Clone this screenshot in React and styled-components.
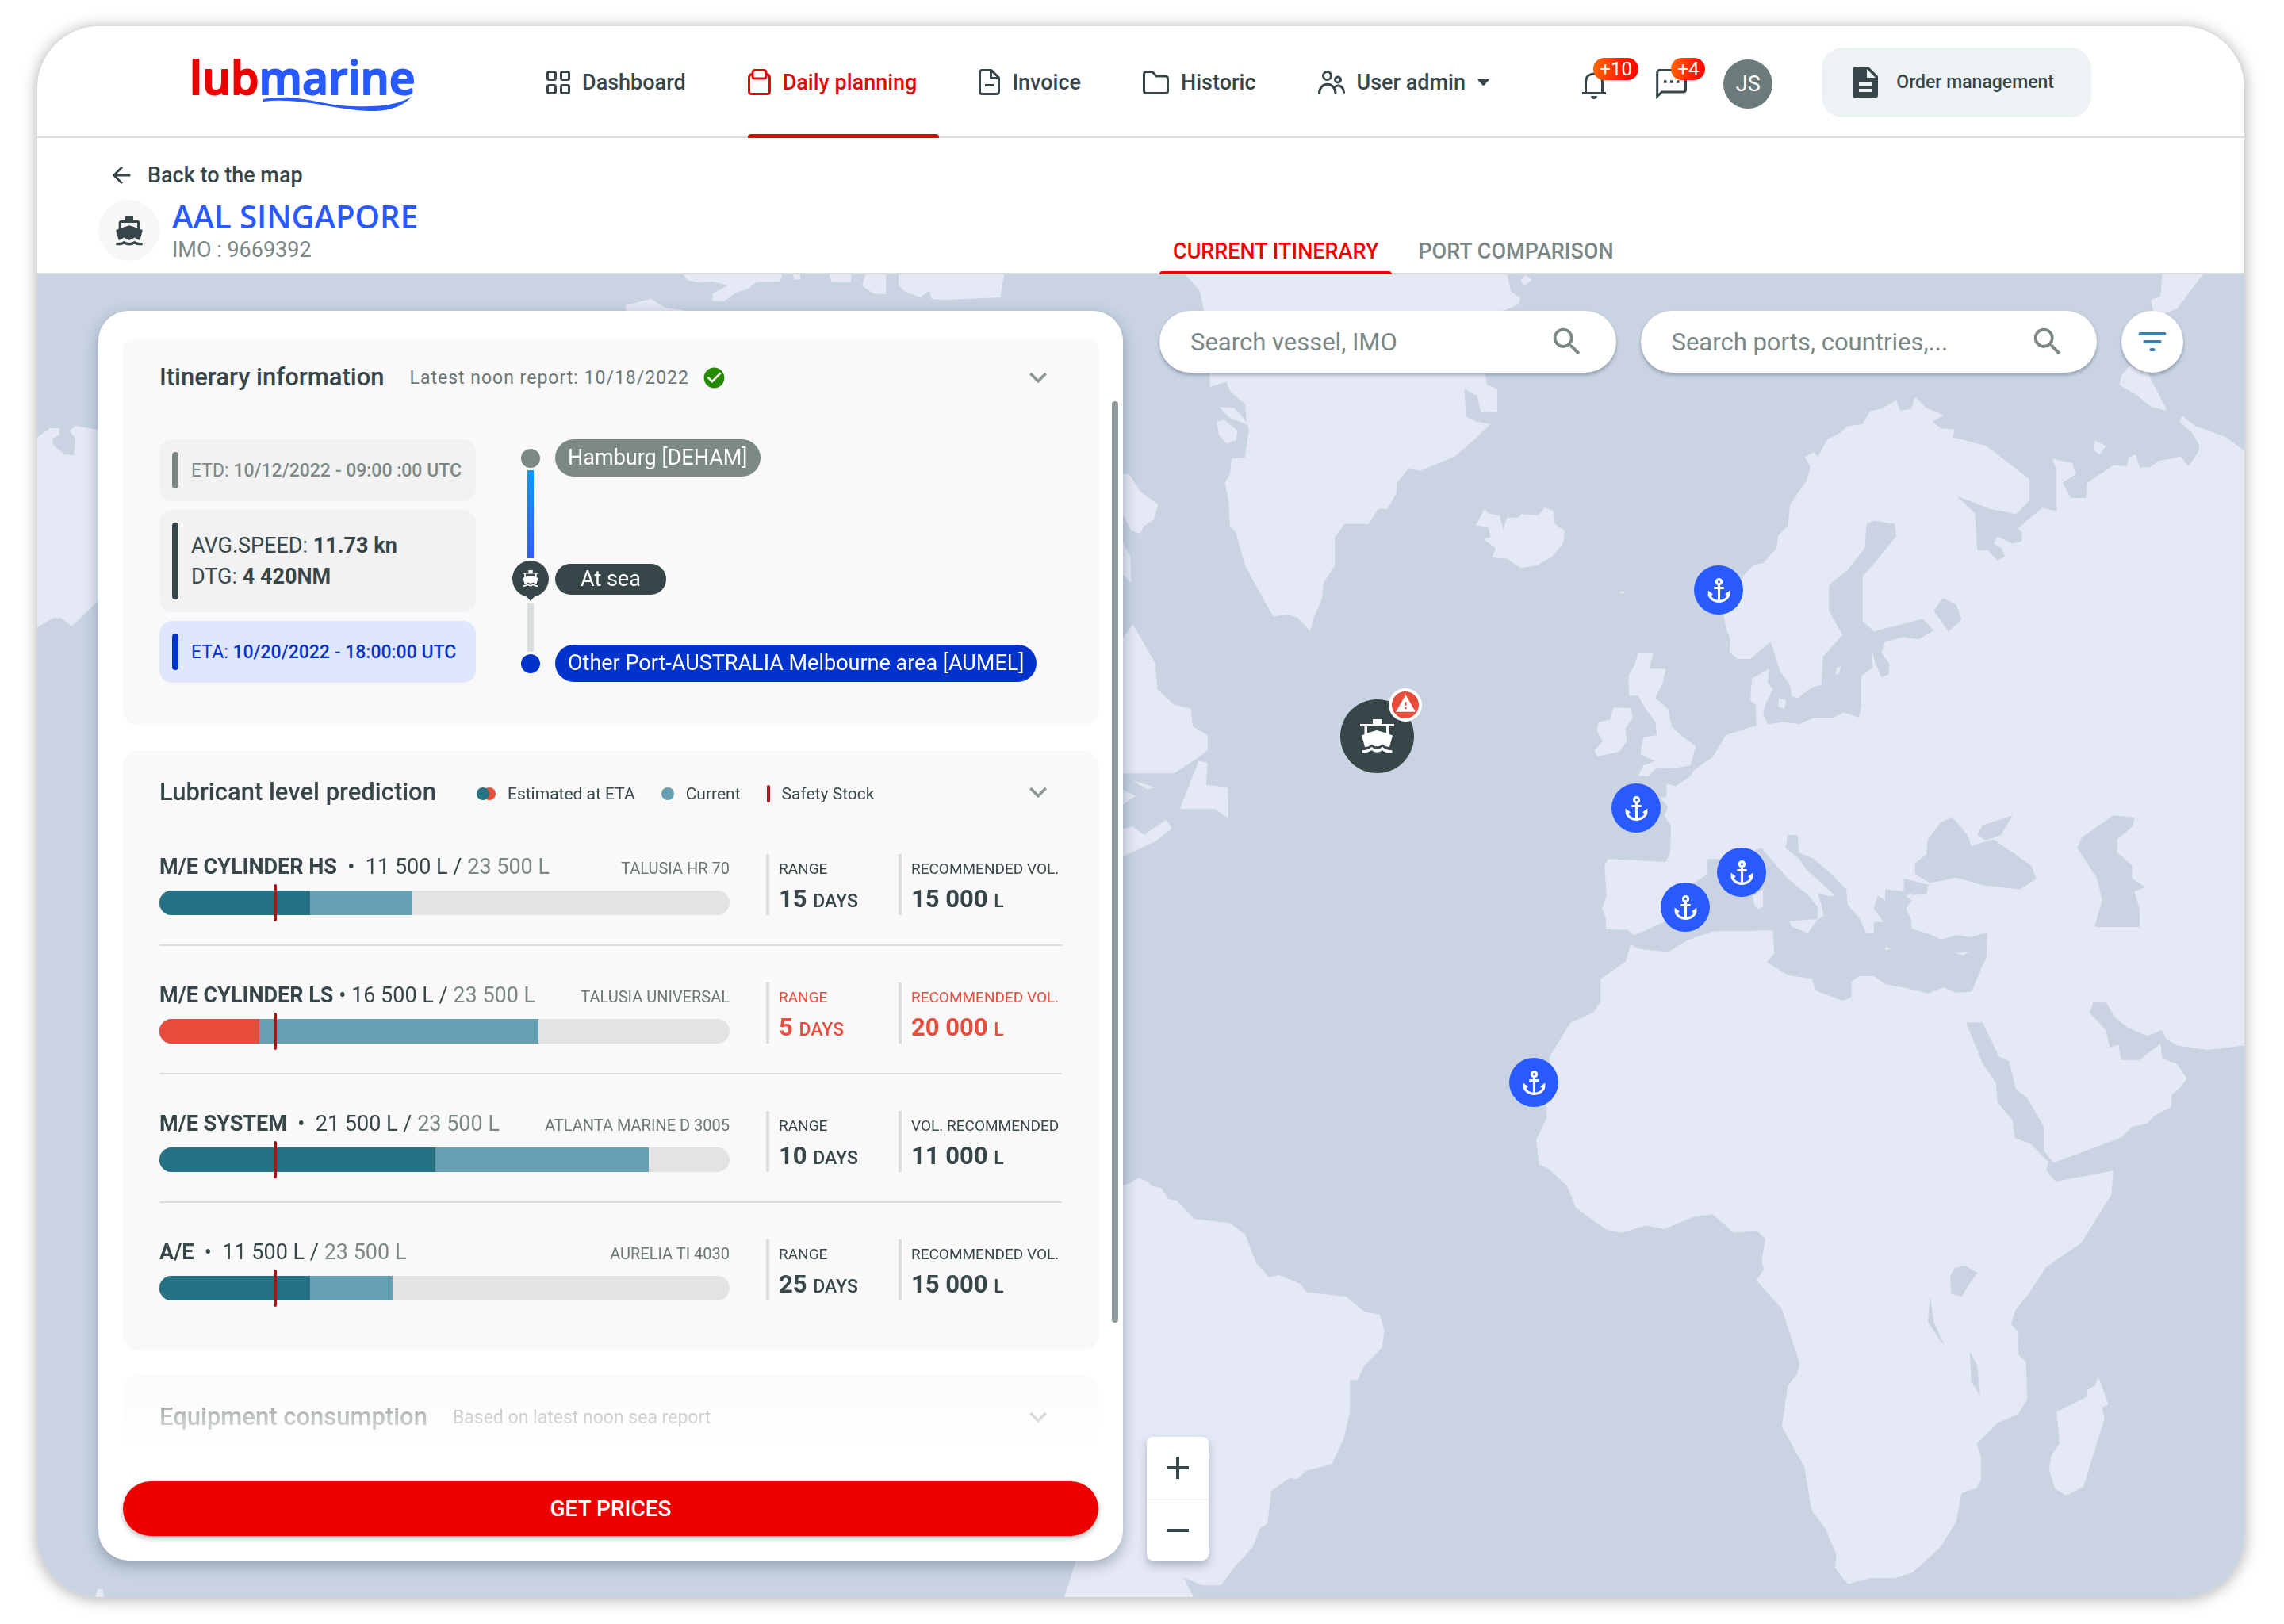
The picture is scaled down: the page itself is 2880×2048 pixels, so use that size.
import React from 'react'
import styled, { createGlobalStyle, css } from 'styled-components';
import {
  MdAnchor,
  MdArrowBack,
  MdCheckCircle,
  MdDescription,
  MdDirectionsBoat,
  MdKeyboardArrowDown,
  MdSearch,
  MdWarning,
} from 'react-icons/md';

const colors = {
  ink: '#374649',
  grey: '#7b8886',
  soft: '#6b7877',
  line: '#dadddd',
  red: '#ed0000',
  alert: '#e84c3d',
  blue: '#285aff',
  navy: '#0032cc',
  teal: '#267284',
  sky: '#67a0b3',
  sea: '#c9d3e2',
  land: '#e5e8f5',
};

const GlobalStyle = createGlobalStyle`
  * {
    box-sizing: border-box;
  }
  body {
    margin: 0;
    background-color: white;
    color: ${colors.ink};
    font-family: Roboto, "Liberation Sans", sans-serif;
  }
  button, input {
    font-family: inherit;
    color: inherit;
  }
  h1, h2, h3, p, dl, dd, ul {
    margin: 0;
    padding: 0;
  }
  a {
    color: inherit;
    text-decoration: none;
  }
  button {
    border: none;
    padding: 0;
    background: none;
    cursor: pointer;
  }
  svg {
    display: block;
    flex: none;
  }
`;

/* ---------- frame ---------- */

const Page = styled.div`
  min-height: 100vh;
  display: flex;
  padding: 33px 50px 34px 47px;
`;
const Frame = styled.div`
  flex: 1;
  min-width: 0;
  display: flex;
  flex-direction: column;
  border-radius: 78px;
  overflow: hidden;
  background-color: white;
  box-shadow: 0 2px 20px rgba(0, 0, 0, 0.34);
`;

/* ---------- header ---------- */

const Header = styled.header`
  height: 141px;
  display: flex;
  align-items: center;
  padding: 2px 193px 0 190px;
  border-bottom: 2px solid ${colors.line};
`;
const Nav = styled.nav`
  align-self: stretch;
  display: flex;
  gap: 78px;
  margin-left: 156px;
`;
const NavItem = styled.a`
  position: relative;
  display: flex;
  align-items: center;
  gap: 15px;
  font-size: 27px;
  font-weight: 500;
  color: ${(props) => (props.$active ? '#dc0a0a' : colors.ink)};
  ${(props) =>
    props.$active &&
    css`
      &::after {
        content: '';
        position: absolute;
        left: 0;
        right: -28px;
        bottom: -2px;
        height: 5px;
        border-radius: 4px 4px 0 0;
        background-color: #dc0a0a;
      }
    `}
`;
const Actions = styled.div`
  display: flex;
  align-items: center;
  gap: 62px;
  margin-left: auto;
`;
const Tools = styled.div`
  display: flex;
  align-items: center;
  padding-top: 4px;
`;
const IconButton = styled.button`
  position: relative;
  margin-right: ${(props) => props.$space}px;
`;
const Badge = styled.span`
  position: absolute;
  top: -14px;
  left: ${(props) => props.$left}px;
  height: 28px;
  padding: 0 8px;
  border-radius: 14px;
  font-size: 24px;
  line-height: 28px;
  color: white;
  background: linear-gradient(100deg, #ff6a00, #ff0a00 80%);
`;
const Avatar = styled.button`
  width: 62px;
  height: 62px;
  border-radius: 50%;
  font-size: 27px;
  color: white;
  background-color: #6b7a7b;
`;
const OrderButton = styled.button`
  display: flex;
  align-items: center;
  gap: 15px;
  height: 88px;
  padding: 0 47px 0 31px;
  border-radius: 26px;
  font-size: 23px;
  font-weight: 500;
  background-color: #edf2f5;
`;

/* ---------- vessel bar ---------- */

const columns = css`
  display: grid;
  grid-template-columns: 1292fr 1307fr;
  column-gap: 30px;
  padding: 0 77px;
`;
const VesselBar = styled.section`
  ${columns}
  border-bottom: 2px solid ${colors.line};
`;
const Vessel = styled.div`
  padding: 30px 0 8px;
`;
const BackLink = styled.a`
  display: inline-flex;
  align-items: center;
  gap: 16px;
  height: 34px;
  margin: 0 0 14px 12px;
  font-size: 27px;
  font-weight: 500;
`;
const VesselId = styled.div`
  display: flex;
  gap: 16px;
`;
const VesselIcon = styled.span`
  width: 77px;
  height: 77px;
  border-radius: 50%;
  display: flex;
  align-items: center;
  justify-content: center;
  background-color: #f7f7f7;
`;
const VesselName = styled.h1`
  font-family: "Open Sans", "Noto Sans", sans-serif;
  font-size: 40px;
  font-weight: 600;
  line-height: 42px;
  color: ${colors.blue};
`;
const VesselImo = styled.p`
  font-size: 27px;
  line-height: 42px;
  color: ${colors.grey};
`;
const Tabs = styled.div`
  display: flex;
  align-items: flex-end;
  gap: 16px;
  padding-left: 16px;
`;
const Tab = styled.button`
  position: relative;
  height: 58px;
  margin-bottom: -2px;
  padding: 0 17px;
  font-size: 27px;
  font-weight: 500;
  color: ${(props) => (props.$active ? colors.red : colors.grey)};
  ${(props) =>
    props.$active &&
    css`
      &::after {
        content: '';
        position: absolute;
        left: 0;
        right: 0;
        bottom: 0;
        height: 4px;
        border-radius: 4px 4px 0 0;
        background-color: ${colors.red};
      }
    `}
`;

/* ---------- map ---------- */

const MapArea = styled.main`
  ${columns}
  position: relative;
  flex: 1;
  padding-top: 46px;
  padding-bottom: 46px;
  background-color: ${colors.sea};
`;
const MapDrawing = styled.svg`
  position: absolute;
  inset: 0;
  width: 100%;
  height: 100%;
`;
const Pin = styled.button`
  position: absolute;
  left: ${(props) => props.$x}px;
  top: ${(props) => props.$y}px;
  width: ${(props) => props.$size}px;
  height: ${(props) => props.$size}px;
  border-radius: 50%;
  display: flex;
  align-items: center;
  justify-content: center;
  color: white;
  background-color: ${(props) => props.$color};
`;
const PinAlert = styled.span`
  position: absolute;
  top: -14px;
  right: -10px;
  width: 42px;
  height: 42px;
  border: 4px solid white;
  border-radius: 50%;
  display: flex;
  align-items: center;
  justify-content: center;
  padding-bottom: 3px;
  background-color: ${colors.alert};
`;
const MapSide = styled.div`
  position: relative;
  display: flex;
  flex-direction: column;
  justify-content: space-between;
`;
const MapToolbar = styled.div`
  display: flex;
  gap: 31px;
  padding-left: 16px;
`;
const SearchBox = styled.label`
  flex: 1;
  min-width: 0;
  height: 78px;
  display: flex;
  align-items: center;
  padding: 0 39px;
  border-radius: 39px;
  background-color: white;
  color: ${colors.grey};
  box-shadow: 0 3px 4px rgba(60, 80, 95, 0.4);
`;
const SearchInput = styled.input`
  flex: 1;
  min-width: 0;
  border: none;
  padding: 0;
  outline: none;
  font-size: 31px;
  background: none;
  text-overflow: ellipsis;
  &::placeholder {
    color: ${colors.grey};
    opacity: 1;
  }
`;
const FilterButton = styled.button`
  width: 78px;
  height: 78px;
  border-radius: 50%;
  display: flex;
  align-items: center;
  justify-content: center;
  background-color: white;
  box-shadow: 0 3px 4px rgba(60, 80, 95, 0.4);
`;
const ZoomControl = styled.div`
  width: 78px;
  border-radius: 8px;
  background-color: white;
  box-shadow: 0 6px 12px rgba(60, 80, 95, 0.35);
`;
const ZoomButton = styled.button`
  width: 100%;
  height: 78px;
  display: flex;
  align-items: center;
  justify-content: center;
  & + & {
    border-top: 2px solid #f3f4f5;
  }
`;

/* ---------- panel ---------- */

const Panel = styled.section`
  position: relative;
  display: flex;
  flex-direction: column;
  padding: 31px;
  border-radius: 38px;
  background-color: white;
  box-shadow: 0 6px 18px rgba(60, 80, 100, 0.42);
`;
const PanelScroll = styled.div`
  flex: 1 1 0;
  min-height: 1440px;
  overflow: hidden;
  display: flex;
  flex-direction: column;
  gap: 31px;
  mask-image: linear-gradient(
    transparent,
    black 10px,
    black calc(100% - 160px),
    rgba(0, 0, 0, 0.32) calc(100% - 80px),
    transparent calc(100% - 30px)
  );
`;
const ScrollThumb = styled.span`
  position: absolute;
  top: 114px;
  bottom: 300px;
  right: 6px;
  width: 8px;
  border-radius: 4px;
  background-color: #919b9c;
`;
const Card = styled.section`
  flex: none;
  padding: 33px 46px ${(props) => props.$bottom}px;
  border-radius: 20px;
  background-color: #f9f9f9;
`;
const CardHeader = styled.div`
  display: flex;
  align-items: center;
  height: 40px;
  margin-bottom: 58px;
`;
const CardTitle = styled.h2`
  font-size: 31px;
  font-weight: 500;
  line-height: 40px;
`;
const CardNote = styled.p`
  display: flex;
  align-items: center;
  gap: 16px;
  margin-left: 32px;
  font-size: 23px;
  letter-spacing: ${(props) => (props.$wide ? 1 : 0)}px;
  color: ${colors.soft};
`;
const Toggle = styled.button`
  width: 44px;
  height: 44px;
  margin: 0 8px 0 auto;
  color: #8b9696;
`;
const Legend = styled.ul`
  display: flex;
  align-items: center;
  gap: 33px;
  margin-left: 51px;
  padding-top: 4px;
  list-style: none;
`;
const LegendItem = styled.li`
  display: flex;
  align-items: center;
  gap: 15px;
  font-size: 21px;
`;

const Itinerary = styled.div`
  display: flex;
  gap: 46px;
`;
const InfoList = styled.div`
  width: 399px;
  display: flex;
  flex-direction: column;
  gap: 11px;
`;
const InfoBox = styled.div`
  display: flex;
  align-items: center;
  gap: 16px;
  height: ${(props) => (props.$tall ? 129 : 78)}px;
  padding: 16px;
  border-radius: 16px;
  font-size: ${(props) => (props.$tall ? 27 : 23)}px;
  line-height: 39px;
  white-space: nowrap;
  color: ${(props) => props.$color};
  background-color: ${(props) => props.$bg};
  &::before {
    content: '';
    width: 8px;
    height: 100%;
    flex: none;
    border-radius: 4px;
    background-color: currentColor;
  }
  strong {
    font-weight: ${(props) => (props.$tall ? 700 : 500)};
  }
`;
const Track = styled.div`
  width: 46px;
  display: flex;
  flex-direction: column;
  align-items: center;
  padding-top: 12px;
`;
const TrackDot = styled.span`
  width: 24px;
  height: 24px;
  border-radius: 50%;
  background-color: ${(props) => props.$color};
`;
const TrackLine = styled.span`
  width: 8px;
  height: ${(props) => props.$length}px;
  margin: 3px 0;
  background: ${(props) => props.$fill};
`;
const Stops = styled.div`
  display: flex;
  flex-direction: column;
  align-items: flex-start;
  margin-left: -38px;
`;
const Stop = styled.span`
  height: ${(props) => props.$height}px;
  padding: 0 ${(props) => props.$pad}px;
  border-radius: 24px;
  margin-bottom: ${(props) => props.$space}px;
  font-size: 27px;
  line-height: ${(props) => props.$height}px;
  white-space: nowrap;
  color: white;
  background-color: ${(props) => props.$color};
`;

const TankRow = styled.article`
  display: flex;
  padding-bottom: 37px;
  & + & {
    padding-top: 46px;
    border-top: 2px solid ${colors.line};
  }
  &:last-child {
    padding-bottom: 0;
  }
`;
const Tank = styled.div`
  flex: 1;
  display: flex;
  flex-direction: column;
  justify-content: space-between;
  height: 77px;
`;
const TankTitle = styled.div`
  display: flex;
  align-items: baseline;
  justify-content: space-between;
`;
const TankName = styled.h3`
  font-size: 27px;
  font-weight: 400;
  line-height: 32px;
  white-space: pre;
  strong {
    font-weight: 700;
  }
  span {
    color: ${colors.grey};
  }
`;
const Brand = styled.span`
  font-size: 20px;
  color: ${colors.soft};
`;
const Gauge = styled.div`
  position: relative;
  height: 31px;
  border-radius: 16px;
  background-color: #e1e4e3;
`;
const GaugeFill = styled.div`
  position: absolute;
  inset: 0 auto 0 0;
  border-radius: 16px 0 0 16px;
  background-color: ${(props) => props.$color};
`;
const SafetyMark = styled.span`
  position: absolute;
  top: -8px;
  bottom: -8px;
  left: 20%;
  width: 4px;
  border-radius: 2px;
  background-color: #a5161c;
`;
const Stat = styled.dl`
  display: flex;
  flex-direction: column;
  justify-content: space-between;
  width: ${(props) => props.$width}px;
  height: 77px;
  margin-left: ${(props) => props.$left}px;
  padding: 7px 0 0 12px;
  border-left: 4px solid ${colors.line};
  color: ${(props) => (props.$alert ? colors.alert : colors.ink)};
  dt {
    font-size: 19px;
    line-height: 24px;
    white-space: nowrap;
  }
  dd {
    font-size: 31px;
    font-weight: 700;
    line-height: 34px;
    white-space: nowrap;
  }
  small {
    font-size: 23px;
    font-weight: 500;
  }
`;
const PricesButton = styled.button`
  height: 69px;
  border-radius: 35px;
  font-size: 28px;
  font-weight: 500;
  color: white;
  background-color: ${colors.red};
  box-shadow: 0 3px 6px rgba(60, 60, 60, 0.35);
`;

/* ---------- drawings ---------- */

function Logo() {
  return (
    <svg width="296" height="100" viewBox="0 0 296 100" role="img" aria-label="Lubmarine">
      <g fontFamily="'Open Sans', sans-serif" fontSize="57" fontWeight="600" strokeWidth="2" strokeLinejoin="round">
        <text x="2" y="65">
          <tspan fill={colors.red} stroke={colors.red}>lub</tspan>
          <tspan fill={colors.blue} stroke={colors.blue}>marine</tspan>
        </text>
      </g>
      <path
        d="M95 71C140 63 165 79 208 80C243 81 262 79 282 68C266 85 243 88 213 85C173 81 140 69 95 74Z"
        fill={colors.blue}
      />
    </svg>
  );
}

function DashboardIcon() {
  return (
    <svg width="30" height="30" viewBox="0 0 30 30" fill="none" stroke="currentColor" strokeWidth="3">
      <rect x="1.5" y="1.5" width="10" height="10" rx="2" />
      <rect x="18.5" y="1.5" width="10" height="10" rx="2" />
      <rect x="1.5" y="18.5" width="10" height="10" rx="2" />
      <rect x="18.5" y="18.5" width="10" height="10" rx="2" />
    </svg>
  );
}

function PlanningIcon() {
  return (
    <svg width="29" height="33" viewBox="0 0 29 33" fill="none" stroke="currentColor" strokeWidth="3">
      <path d="M5 6.5C3 7 1.5 8.500 1.500 11V28.500Q1.500 31.500 4.500 31.500H24.500Q27.500 31.500 27.500 28.500V11C27.500 8.500 26 7 24 6.500" />
      <path d="M6 5Q6 1.500 9 1.500H20Q23 1.500 23 5V9Q23 12 20 12H9Q6 12 6 9Z" />
    </svg>
  );
}

function InvoiceIcon() {
  return (
    <svg width="27" height="33" viewBox="0 0 27 33" fill="none" stroke="currentColor" strokeWidth="3" strokeLinejoin="round">
      <path d="M4.500 1.500H16L25.500 11V28.500Q25.500 31.500 22.500 31.500H4.500Q1.500 31.500 1.500 28.500V4.500Q1.500 1.500 4.500 1.500Z" />
      <path d="M15.500 2V11.500H25M8 20.500H19" />
    </svg>
  );
}

function FolderIcon() {
  return (
    <svg width="33" height="30" viewBox="0 0 33 30" fill="none" stroke="currentColor" strokeWidth="3" strokeLinejoin="round">
      <path d="M4.500 1.500H12L17 7H28.500Q31.500 7 31.500 10V25.500Q31.500 28.500 28.500 28.500H4.500Q1.500 28.500 1.500 25.500V4.500Q1.500 1.500 4.500 1.500Z" />
    </svg>
  );
}

function UsersIcon() {
  return (
    <svg width="34" height="30" viewBox="0 0 34 30" fill="none" stroke="currentColor" strokeWidth="3" strokeLinecap="round">
      <circle cx="11.500" cy="6.500" r="5" />
      <circle cx="25" cy="11.500" r="3.500" />
      <path d="M1.500 28.500C2 13.500 21.500 13.500 22 28.500M21 20.500C26 17 32 20 32.500 27.500" />
    </svg>
  );
}

function Caret() {
  return (
    <svg width="15" height="9" viewBox="0 0 15 9">
      <path d="M1.500 0H13.500Q15.500 .5 14 2.500L8.500 8.500Q7.500 9.300 6.500 8.500L1 2.500Q-.5 .5 1.500 0Z" fill="currentColor" />
    </svg>
  );
}

function BellIcon() {
  return (
    <svg width="30" height="38" viewBox="0 0 30 38" fill="none" stroke="currentColor" strokeWidth="3">
      <path d="M0 30.500H30M4.500 30V16C4.500 2.500 25.500 2.500 25.500 16V30" />
      <path d="M11 34H19Q18.500 38 15 38T11 34Z" fill="currentColor" stroke="none" />
    </svg>
  );
}

function ChatIcon() {
  return (
    <svg width="39" height="38" viewBox="0 0 39 38" fill="none" stroke="currentColor" strokeWidth="3">
      <path d="M1.700 34.500V4.500Q1.700 1.500 4.700 1.500H34.500Q37.500 1.500 37.500 4.500V26Q37.500 29 34.500 29H7.500Z" />
      <path d="M10 16H13.500M18 16H21.500M26 16H29.500" strokeWidth="3.500" />
    </svg>
  );
}

function BoatIcon({ size }) {
  return (
    <svg width={size} height={size} viewBox="0 0 43 43" fill="currentColor">
      <path fillRule="evenodd" d="M16 0H27V6H43V9H37V19L41 20.500L37 35Q32.500 35.500 28 31.500Q21.500 37 14.500 31.500Q10 35.500 6 35L2 20.500L5.500 19V9H0V6H16ZM9 9V17.500L21 14L33 17.500V9Z" />
      <path d="M2 41C8 41 11 40 14.500 37Q21.500 43 28 37C31 40 35 41 40.500 41" fill="none" stroke="currentColor" strokeWidth="3.500" />
    </svg>
  );
}

function BoatMarker() {
  return (
    <svg width="46" height="51" viewBox="0 0 46 51">
      <circle cx="23" cy="23" r="23" fill={colors.ink} />
      <path d="M16 43L23 51L30 43Z" fill={colors.ink} />
      <g transform="translate(12.500 12) scale(.49)" color="white">
        <BoatIcon size={43} />
      </g>
    </svg>
  );
}

function FilterIcon() {
  return (
    <svg width="36" height="26" viewBox="0 0 36 26" stroke="#3a82b5" strokeWidth="4" strokeLinecap="round">
      <path d="M2.500 3H33.500M8.500 13H27.500M16.500 23H19.500" />
    </svg>
  );
}

// Coastlines, one group for each sheet they were traced on.
const northLand = [
  'M100 10L120 50 125 95 150 150 133 240 133 270 155 258 160 280 180 310 182 345 185 370 180 432 162 435 160 470 153 490 158 530 160 590 168 605 180 680 205 760 218 798 235 793 250 800 267 832 272 800 283 755 285 720 300 680 300 615 313 585 345 585 358 550 370 550 382 515 383 490 398 458 415 462 460 430 490 385 508 355 490 350 475 338 473 275 490 290 495 328 517 327 517 275 503 265 500 235 525 95 545 80 548 65 535 50 530 10Z',
  'M555 12L563 24 553 38 548 24Z',
  'M145 315L165 318 175 335 185 358 160 342Z',
  'M142 350L152 345 170 370 168 392 155 400 145 380Z',
  'M500 550L505 560 520 565 525 598 530 570 545 570 550 562 572 565 580 547 592 555 594 585 607 600 605 630 590 660 570 680 548 686 530 665 510 662 515 640 498 620 508 615 505 592 488 588Z',
  'M1050 300L1055 325 1070 320 1075 293 1090 318 1113 335 1098 350 1110 365 1128 368 1125 385 1170 405 1200 445 1228 482 1228 530 1210 562 1175 550 1130 520 1155 560 1158 645 1172 645 1185 668 1195 660 1190 640 1180 630 1185 613 1205 630 1217 625 1218 605 1212 595 1245 548 1264 555 1264 460 1258 435 1285 445 1290 470 1272 490 1283 525 1303 525 1305 490 1340 450 1358 452 1360 432 1370 425 1375 455 1388 455 1400 440 1430 430 1440 452 1453 420 1455 405 1445 375 1428 350 1432 337 1450 360 1490 385 1516 418V1560H1172V1523L1150 1535 1130 1530 1110 1540 1090 1525 1070 1515 1070 1495 1063 1470 1070 1450 1063 1440 1095 1415 1060 1400 1060 1430 1035 1425 1035 1450 1025 1440 1020 1470 1033 1500 1020 1500 1020 1525 1010 1525 1000 1490 985 1460 983 1425 960 1385 940 1355 920 1340 918 1300 905 1300 902 1330 920 1355 930 1380 950 1410 968 1440 960 1440 945 1435 950 1460 953 1485 945 1495 945 1465 930 1435 905 1400 880 1350 870 1330 850 1340 835 1355 797 1355 797 1390 780 1410 765 1440 740 1500 720 1515 700 1530 690 1518 662 1517 662 1490 657 1470 663 1440 660 1370 665 1355 690 1357 742 1362 748 1340 749 1280 740 1255 745 1235 735 1215 743 1212 743 1182 755 1188 775 1165 780 1150 805 1120 822 1070 863 1048 862 1000 855 990 857 940 880 918 878 950 885 965 875 1000 872 1020 878 1045 900 1040 920 1045 940 1030 965 1030 980 1018 1000 1030 1003 1005 1003 935 1018 915 1018 880 1022 905 1030 938 1040 930 1040 905 1030 880 1035 855 1060 845 1080 850 1100 830 1085 803 1020 832 1005 808 1005 705 1018 680 1050 612 1048 585 1020 577 1010 585 1008 640 985 690 960 725 960 785 978 840 952 890 950 955 938 960 918 985 910 980 908 955 895 925 885 870 882 855 855 895 838 895 827 880 828 850 822 820 818 780 840 740 845 705 860 678 872 675 890 640 892 612 905 590 908 540 930 485 935 455 928 430 940 420 945 430 958 390 975 375 985 360 1005 355 1015 325 1030 320Z',
  'M705 882L725 882 720 918 742 918 738 950 728 985 745 1010 750 1050 765 1075 782 1095 775 1140 750 1147 730 1145 718 1165 705 1163 712 1140 728 1130 708 1115 712 1075 730 1070 728 1040 715 1010 705 980 693 980 692 935 700 910Z',
  'M672 1007L695 1008 698 1030 688 1055 690 1085 680 1108 650 1120 647 1105 658 1085 650 1060 652 1040 668 1035Z',
  'M858 1440L872 1425 872 1465 865 1470 860 1460Z',
  'M907 1498L945 1493 932 1525 910 1510Z',
  'M1405 10L1460 10 1425 90 1395 110 1390 70 1403 60Z',
  'M1362 220L1385 235 1412 325 1390 315 1372 290 1348 265 1350 245Z',
  'M1315 393L1330 405 1322 425 1313 415Z',
  'M893 985L903 990 900 1010 892 1005Z',
  'M970 915L976 912 974 927 969 932Z',
  'M680 740L688 740 684 746Z',
  'M16 470L25 470 40 510 64 540 58 575 45 590 40 607 28 600 16 560Z',
  'M16 625L27 660 28 720 16 700Z',
  'M16 850L30 815 60 905 63 965 85 1000 108 1010 110 1050 130 1070 130 1105 115 1125 85 1158 0 1158Z',
  'M118 1130L130 1133 128 1185 157 1190 158 1262 140 1240 93 1240Z',
  'M10 1290L30 1280 45 1300 75 1265 82 1285 60 1315 16 1350Z',
  'M30 1175L60 1190 50 1195Z',
  'M16 1195L34 1210 16 1230Z',
];
const northWater = [
  'M1125 1260L1145 1300 1150 1325 1180 1310 1230 1370 1237 1400 1215 1425 1165 1415 1130 1398 1095 1410 1075 1390 1075 1365 1090 1345 1092 1310 1110 1270Z',
  'M1158 1300L1165 1278 1205 1255 1190 1300 1170 1312Z',
  'M1340 1255L1368 1260 1366 1280 1345 1310 1345 1340 1365 1370 1365 1400 1383 1420 1368 1430 1375 1470 1375 1530 1345 1530 1315 1510 1325 1450 1318 1400 1292 1330 1298 1305Z',
  'M1112 755L1130 770 1137 805 1120 832 1100 785Z',
  'M1072 1422L1092 1420 1090 1436 1070 1438Z',
];
const southLand = [
  'M695 20L705 30 745 37 772 10 805 -10 885 -12 887 40 877 60 905 90 937 98 942 125 978 148 990 140 990 105 1000 92 1020 92 1035 110 1065 120 1092 132 1113 118 1130 130 1150 128 1170 50 1172 -20 1516 -20V250L1465 260 1425 250 1410 235 1405 215 1385 228 1360 210 1343 188 1330 152 1313 152 1308 175 1330 215 1335 255 1347 248 1350 283 1375 283 1403 245 1405 280 1425 292 1438 325 1430 345 1418 362 1417 390 1395 410 1385 428 1365 435 1350 460 1260 517 1247 490 1247 435 1225 370 1210 350 1200 285 1187 275 1165 198 1143 198 1165 290 1183 335 1185 380 1205 420 1208 460 1230 475 1253 515 1250 535 1263 560 1340 535 1337 590 1297 700 1250 755 1225 820 1210 850 1203 885 1212 900 1213 955 1223 970 1225 1055 1213 1090 1185 1110 1157 1158 1163 1185 1163 1240 1157 1258 1137 1270 1130 1335 1108 1395 1072 1450 1050 1463 1015 1463 985 1477 968 1440 970 1410 955 1350 937 1310 927 1210 897 1118 905 1025 917 1000 921 975 897 850 863 785 873 760 870 740 875 690 863 672 833 677 805 635 780 640 740 668 715 660 683 677 663 670 622 620 610 570 585 530 573 522 569 465 583 415 582 385 587 275 615 198 645 175 655 150 655 98 688 60Z',
  'M1320 1005L1333 1068 1325 1075 1328 1100 1300 1255 1277 1275 1262 1260 1254 1215 1257 1185 1268 1155 1264 1085 1305 1050 1305 1035 1315 1025Z',
  'M-10 570L20 568 38 552 50 560 55 570 68 575 78 600 88 602 112 645 160 655 180 680 195 745 212 778 225 773 253 792 262 812 315 822 340 857 360 863 366 900 363 938 340 978 330 1012 320 1012 320 1085 312 1145 296 1203 260 1220 250 1238 240 1235 215 1265 210 1340 200 1350 190 1393 165 1440 148 1480 123 1480 98 1462 112 1510 -62 1510 -45 1420Z',
  'M1130 40L1147 35 1140 45Z',
  'M1035 25L1043 30 1035 33Z',
];
const southWater = [
  'M1142 752L1158 768 1145 800 1137 822 1123 815 1122 775 1128 757Z',
  'M1095 822L1100 880 1115 937 1092 880Z',
  'M1148 945L1158 980 1162 1048 1150 1015Z',
];
const westLand = [
  'M0 650L25 600 38 600 38 625 28 640 30 665 45 700 58 702 60 640 52 610 60 590 100 612V1230L55 1350 40 1318 30 1318 0 1365Z',
  'M895 18L1030 18 1028 45 995 47 985 70 965 90 950 120 935 118 935 90 955 60 935 45 915 48 900 40Z',
  'M1045 18H1055V38H1047Z',
  'M1095 18H1125V47H1098Z',
  'M1145 18H1173V93L1155 90 1140 60Z',
  'M1190 18H1335L1330 105 1250 115 1235 110 1233 80 1220 105 1200 85 1190 60Z',
  'M815 135L850 110 870 145 897 155 900 165 817 165Z',
];

function WorldMap() {
  const draw = (paths, fill) => paths.map((d) => <path key={d} d={d} fill={fill} />);
  return (
    <MapDrawing viewBox="0 0 2783 1669" preserveAspectRatio="xMinYMin slice" aria-hidden="true">
      <g transform="translate(-7 -6) scale(.9184 .3333)">{draw(westLand, colors.land)}</g>
      <g transform="translate(1353 -6) scale(.944 .5485)">
        {draw(northLand, colors.land)}
        {draw(northWater, colors.sea)}
      </g>
      <g transform="translate(1353 834) scale(.944 .5536)">
        {draw(southLand, colors.land)}
        {draw(southWater, colors.sea)}
      </g>
      <path d="M73 1669L76 1658 82 1658 85 1669Z" fill={colors.land} />
    </MapDrawing>
  );
}

/* ---------- data ---------- */

const navItems = [
  { label: 'Dashboard', icon: <DashboardIcon /> },
  { label: 'Daily planning', icon: <PlanningIcon />, active: true },
  { label: 'Invoice', icon: <InvoiceIcon /> },
  { label: 'Historic', icon: <FolderIcon /> },
];

const ports = [
  { name: 'Norway', x: 2089, y: 367 },
  { name: 'Brittany', x: 1985, y: 642 },
  { name: 'Liguria', x: 2118, y: 723 },
  { name: 'Balearic', x: 2047, y: 767 },
  { name: 'Canary', x: 1856, y: 988 },
];

const tanks = [
  { name: 'M/E CYLINDER HS', dot: '  •  ', level: '11 500 L', brand: 'TALUSIA HR 70', eta: 26.4, current: 44.4, days: 15, volLabel: 'RECOMMENDED VOL.', vol: '15 000' },
  { name: 'M/E CYLINDER LS', dot: ' • ', level: '16 500 L', brand: 'TALUSIA UNIVERSAL', eta: 17.5, current: 66.5, days: 5, volLabel: 'RECOMMENDED VOL.', vol: '20 000', alert: true },
  { name: 'M/E SYSTEM', dot: '  •  ', level: '21 500 L', brand: 'ATLANTA MARINE D 3005', eta: 48.4, current: 85.8, days: 10, volLabel: 'VOL. RECOMMENDED', vol: '11 000' },
  { name: 'A/E', dot: '  •  ', level: '11 500 L', brand: 'AURELIA TI 4030', eta: 26.4, current: 40.9, days: 25, volLabel: 'RECOMMENDED VOL.', vol: '15 000' },
];

/* ---------- sections ---------- */

function TopBar() {
  return (
    <Header>
      <a href="#home"><Logo /></a>
      <Nav>
        {navItems.map((item) => (
          <NavItem key={item.label} href={`#${item.label}`} $active={item.active}>
            {item.icon}
            {item.label}
          </NavItem>
        ))}
        <NavItem href="#users">
          <UsersIcon />
          User admin
          <Caret />
        </NavItem>
      </Nav>
      <Actions>
        <Tools>
          <IconButton $space={63} aria-label="Notifications">
            <BellIcon />
            <Badge $left={14}>+10</Badge>
          </IconButton>
          <IconButton $space={46} aria-label="Messages">
            <ChatIcon />
            <Badge $left={19}>+4</Badge>
          </IconButton>
          <Avatar>JS</Avatar>
        </Tools>
        <OrderButton>
          <MdDescription size={48} />
          Order management
        </OrderButton>
      </Actions>
    </Header>
  );
}

function VesselHeader() {
  return (
    <VesselBar>
      <Vessel>
        <BackLink href="#map">
          <MdArrowBack size={34} />
          Back to the map
        </BackLink>
        <VesselId>
          <VesselIcon><MdDirectionsBoat size={40} /></VesselIcon>
          <div>
            <VesselName>AAL SINGAPORE</VesselName>
            <VesselImo>IMO : 9669392</VesselImo>
          </div>
        </VesselId>
      </Vessel>
      <Tabs>
        <Tab $active>CURRENT ITINERARY</Tab>
        <Tab>PORT COMPARISON</Tab>
      </Tabs>
    </VesselBar>
  );
}

function ItineraryCard() {
  return (
    <Card $bottom={54}>
      <CardHeader>
        <CardTitle>Itinerary information</CardTitle>
        <CardNote $wide>
          Latest noon report: 10/18/2022
          <MdCheckCircle size={31} color="#258a00" />
        </CardNote>
        <Toggle aria-label="Toggle itinerary"><MdKeyboardArrowDown size={44} /></Toggle>
      </CardHeader>
      <Itinerary>
        <InfoList>
          <InfoBox $color={colors.grey} $bg="#f2f2f2">
            <p>ETD: <strong>10/12/2022 - 09:00 :00 UTC</strong></p>
          </InfoBox>
          <InfoBox $tall $color={colors.ink} $bg="#f2f2f2">
            <div>
              <p>AVG.SPEED: <strong>11.73 kn</strong></p>
              <p>DTG: <strong>4 420NM</strong></p>
            </div>
          </InfoBox>
          <InfoBox $color={colors.navy} $bg="#e0e6fb">
            <p>ETA: <strong>10/20/2022 - 18:00:00 UTC</strong></p>
          </InfoBox>
        </InfoList>
        <Track>
          <TrackDot $color={colors.grey} />
          <TrackLine $length={111} $fill="linear-gradient(#0f97ff, #315bff)" />
          <BoatMarker />
          <TrackLine $length={61} $fill={colors.line} />
          <TrackDot $color={colors.navy} />
        </Track>
        <Stops>
          <Stop $height={47} $pad={16} $space={110} $color={colors.grey}>Hamburg [DEHAM]</Stop>
          <Stop $height={39} $pad={32} $space={63} $color={colors.ink}>At sea</Stop>
          <Stop $height={47} $pad={16} $space={0} $color={colors.navy}>
            Other Port-AUSTRALIA Melbourne area [AUMEL]
          </Stop>
        </Stops>
      </Itinerary>
    </Card>
  );
}

function LubricantCard() {
  return (
    <Card $bottom={63}>
      <CardHeader>
        <CardTitle>Lubricant level prediction</CardTitle>
        <Legend>
          <LegendItem>
            <svg width="24" height="16" viewBox="0 0 24 16">
              <circle cx="16" cy="8" r="8" fill={colors.alert} />
              <circle cx="8" cy="8" r="8" fill={colors.teal} />
            </svg>
            Estimated at ETA
          </LegendItem>
          <LegendItem>
            <svg width="16" height="16" viewBox="0 0 16 16">
              <circle cx="8" cy="8" r="8" fill={colors.sky} />
            </svg>
            Current
          </LegendItem>
          <LegendItem>
            <svg width="4" height="22" viewBox="0 0 4 22">
              <rect width="4" height="22" rx="2" fill="#a5161c" />
            </svg>
            Safety Stock
          </LegendItem>
        </Legend>
        <Toggle aria-label="Toggle lubricants"><MdKeyboardArrowDown size={44} /></Toggle>
      </CardHeader>
      {tanks.map((tank) => (
        <TankRow key={tank.name}>
          <Tank>
            <TankTitle>
              <TankName>
                <strong>{tank.name}</strong>{tank.dot}{tank.level} / <span>23 500 L</span>
              </TankName>
              <Brand>{tank.brand}</Brand>
            </TankTitle>
            <Gauge>
              <GaugeFill $color={colors.sky} style={{ width: `${tank.current}%` }} />
              <GaugeFill $color={tank.alert ? colors.alert : colors.teal} style={{ width: `${tank.eta}%` }} />
              <SafetyMark />
            </Gauge>
          </Tank>
          <Stat $left={46} $width={167} $alert={tank.alert}>
            <dt>RANGE</dt>
            <dd>{tank.days} <small>DAYS</small></dd>
          </Stat>
          <Stat $left={0} $width={206} $alert={tank.alert}>
            <dt>{tank.volLabel}</dt>
            <dd>{tank.vol} <small>L</small></dd>
          </Stat>
        </TankRow>
      ))}
    </Card>
  );
}

export default function App() {
  return (
    <>
      <GlobalStyle />
      <Page>
        <Frame>
          <TopBar />
          <VesselHeader />
          <MapArea>
            <WorldMap />
            {ports.map((port) => (
              <Pin key={port.name} aria-label={port.name} $x={port.x} $y={port.y} $size={62} $color={colors.blue}>
                <MdAnchor size={37} />
              </Pin>
            ))}
            <Pin aria-label="AAL Singapore" $x={1643} $y={536} $size={93} $color={colors.ink}>
              <BoatIcon size={43} />
              <PinAlert><MdWarning size={27} /></PinAlert>
            </Pin>
            <Panel>
              <PanelScroll>
                <ItineraryCard />
                <LubricantCard />
                <Card $bottom={54}>
                  <CardHeader>
                    <CardTitle>Equipment consumption</CardTitle>
                    <CardNote>Based on latest noon sea report</CardNote>
                    <Toggle aria-label="Toggle equipment"><MdKeyboardArrowDown size={44} /></Toggle>
                  </CardHeader>
                </Card>
              </PanelScroll>
              <ScrollThumb />
              <PricesButton>GET PRICES</PricesButton>
            </Panel>
            <MapSide>
              <MapToolbar>
                <SearchBox>
                  <SearchInput aria-label="Search vessel" placeholder="Search vessel, IMO" />
                  <MdSearch size={46} />
                </SearchBox>
                <SearchBox>
                  <SearchInput aria-label="Search ports" placeholder="Search ports, countries,..." />
                  <MdSearch size={46} />
                </SearchBox>
                <FilterButton aria-label="Filters"><FilterIcon /></FilterButton>
              </MapToolbar>
              <ZoomControl>
                <ZoomButton aria-label="Zoom in">
                  <svg width="28" height="28" viewBox="0 0 28 28" stroke={colors.ink} strokeWidth="4">
                    <path d="M0 14H28M14 0V28" />
                  </svg>
                </ZoomButton>
                <ZoomButton aria-label="Zoom out">
                  <svg width="28" height="28" viewBox="0 0 28 28" stroke={colors.ink} strokeWidth="4">
                    <path d="M0 14H28" />
                  </svg>
                </ZoomButton>
              </ZoomControl>
            </MapSide>
          </MapArea>
        </Frame>
      </Page>
    </>
  );
}
